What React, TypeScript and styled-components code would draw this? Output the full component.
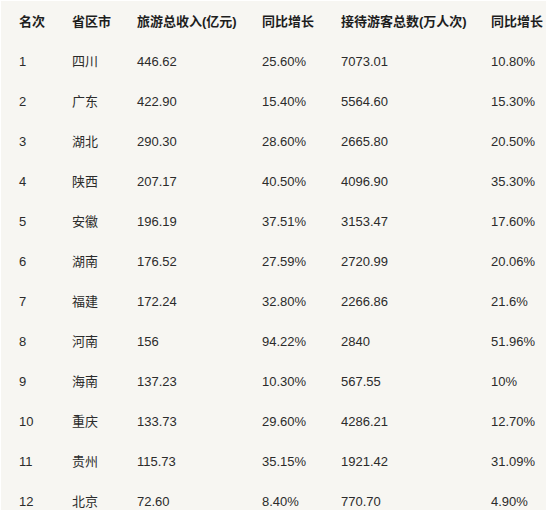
import styled, { createGlobalStyle } from "styled-components";

const GlobalStyle = createGlobalStyle`
  html, body {
    margin: 0;
    padding: 0;
    background: #ffffff;
  }
  body {
    font-family: "Liberation Sans", Arial, "Noto Sans CJK SC", sans-serif;
  }
`;

interface Row {
  rank: number;
  region: string;
  income: string;
  incomeGrowth: string;
  visitors: string;
  visitorGrowth: string;
}

const rows: Row[] = [
  { rank: 1, region: "四川", income: "446.62", incomeGrowth: "25.60%", visitors: "7073.01", visitorGrowth: "10.80%" },
  { rank: 2, region: "广东", income: "422.90", incomeGrowth: "15.40%", visitors: "5564.60", visitorGrowth: "15.30%" },
  { rank: 3, region: "湖北", income: "290.30", incomeGrowth: "28.60%", visitors: "2665.80", visitorGrowth: "20.50%" },
  { rank: 4, region: "陕西", income: "207.17", incomeGrowth: "40.50%", visitors: "4096.90", visitorGrowth: "35.30%" },
  { rank: 5, region: "安徽", income: "196.19", incomeGrowth: "37.51%", visitors: "3153.47", visitorGrowth: "17.60%" },
  { rank: 6, region: "湖南", income: "176.52", incomeGrowth: "27.59%", visitors: "2720.99", visitorGrowth: "20.06%" },
  { rank: 7, region: "福建", income: "172.24", incomeGrowth: "32.80%", visitors: "2266.86", visitorGrowth: "21.6%" },
  { rank: 8, region: "河南", income: "156", incomeGrowth: "94.22%", visitors: "2840", visitorGrowth: "51.96%" },
  { rank: 9, region: "海南", income: "137.23", incomeGrowth: "10.30%", visitors: "567.55", visitorGrowth: "10%" },
  { rank: 10, region: "重庆", income: "133.73", incomeGrowth: "29.60%", visitors: "4286.21", visitorGrowth: "12.70%" },
  { rank: 11, region: "贵州", income: "115.73", incomeGrowth: "35.15%", visitors: "1921.42", visitorGrowth: "31.09%" },
  { rank: 12, region: "北京", income: "72.60", incomeGrowth: "8.40%", visitors: "770.70", visitorGrowth: "4.90%" },
];

const headers = ["名次", "省区市", "旅游总收入(亿元)", "同比增长", "接待游客总数(万人次)", "同比增长"];

const Panel = styled.div`
  width: 545px;
  height: 509px;
  margin: 1px 0 0 1px;
  background: #f7f6f2;
  overflow: hidden;
`;

const Table = styled.div`
  display: flex;
  flex-direction: column;
  padding: 1px 0 0 18px;
`;

const TableRow = styled.div`
  display: grid;
  grid-template-columns: 53px 65px 125px 79px 150px 1fr;
  align-items: center;
  height: 40px;
  &:first-child {
    height: 40px;
  }
`;

const Cell = styled.div<{ $head?: boolean }>`
  font-size: 13px;
  line-height: 16px;
  color: ${(p) => (p.$head ? "#1e1e1e" : "#2b2b2b")};
  font-weight: ${(p) => (p.$head ? 700 : 400)};
  white-space: nowrap;
`;

export default function App() {
  return (
    <>
      <GlobalStyle />
      <Panel>
        <Table>
          <TableRow>
            {headers.map((h, i) => (
              <Cell $head key={i}>
                {h}
              </Cell>
            ))}
          </TableRow>
          {rows.map((r) => (
            <TableRow key={r.rank}>
              <Cell>{r.rank}</Cell>
              <Cell>{r.region}</Cell>
              <Cell>{r.income}</Cell>
              <Cell>{r.incomeGrowth}</Cell>
              <Cell>{r.visitors}</Cell>
              <Cell>{r.visitorGrowth}</Cell>
            </TableRow>
          ))}
        </Table>
      </Panel>
    </>
  );
}
